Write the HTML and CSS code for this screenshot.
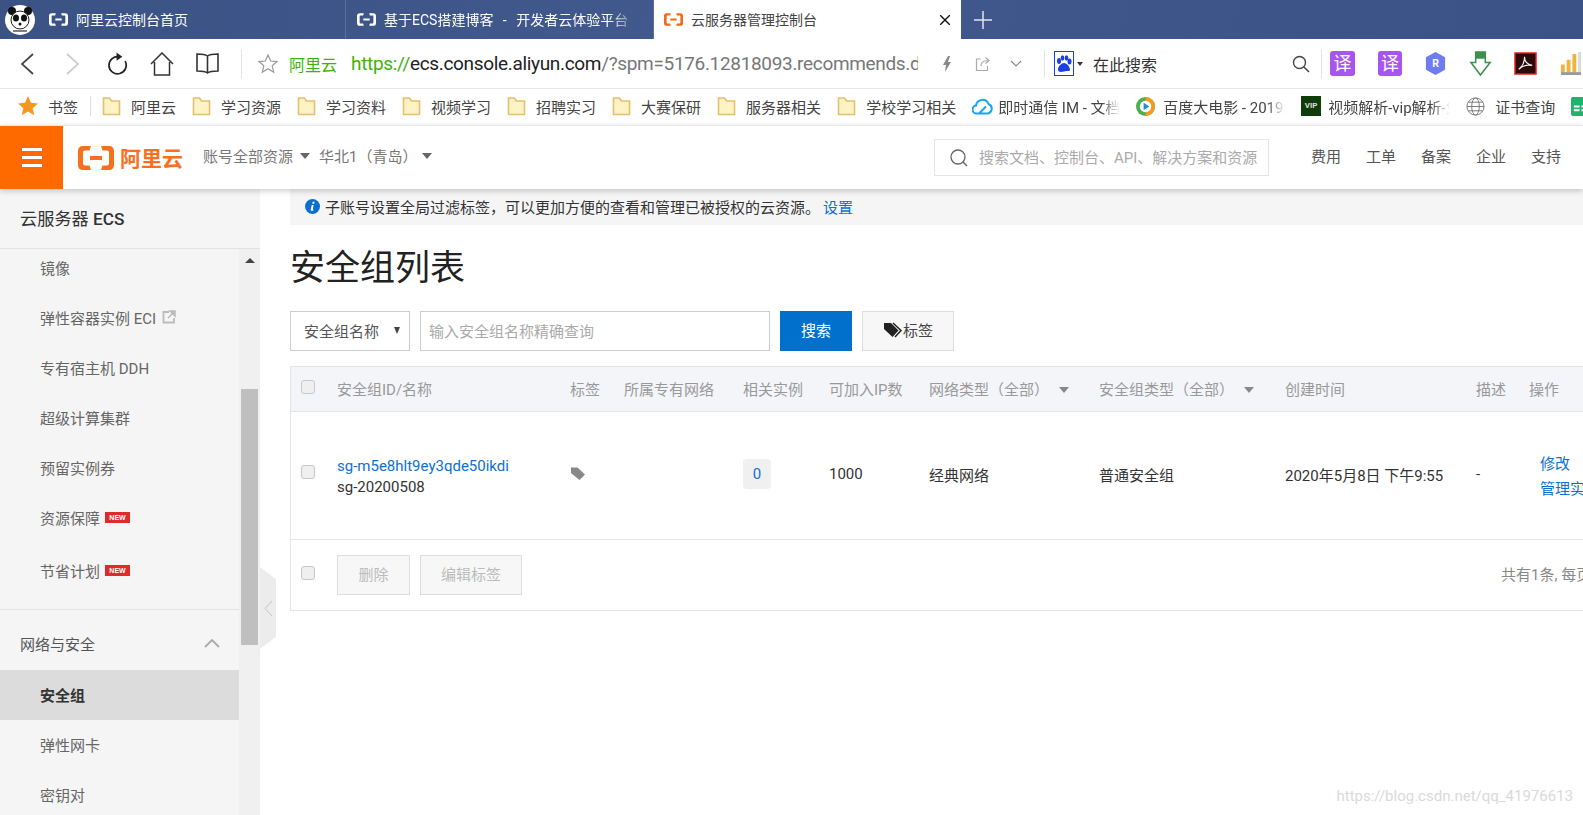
FILE: index.html
```html
<!DOCTYPE html>
<html>
<head>
  <meta charset="utf-8">
  <title>云服务器管理控制台</title>
  <link rel="stylesheet" href="styles.css">
</head>
<body>

  <svg class="sprite">
    <symbol id="ali" viewBox="0 0 36 24">
      <path d="M13 0H5C2 0 0 2 0 5v14c0 3 2 5 5 5h8l-1.500-4.500H7C5.800 19.500 5 18.700 5 17.500v-11C5 5.300 5.800 4.500 7 4.500h4.500zM23 0h8c3 0 5 2 5 5v14c0 3-2 5-5 5h-8l1.500-4.500H29c1.200 0 2-.8 2-2v-11c0-1.200-.8-2-2-2h-4.500zM12 10h12v4H12z"/>
    </symbol>
    <symbol id="folder" viewBox="0 0 19 19">
      <path d="M1.500 1h6l2 3h8v13.500h-16z" fill="#fdf3c4" stroke="#e3c070" stroke-width="1.600"/>
    </symbol>
    <symbol id="tag" viewBox="0 0 16 16">
      <path d="M1 2.500h6.500L15 9.500 9.500 15 1 8z"/>
    </symbol>
  </svg>

  <!-- Browser tabs -->
  <div class="tabbar">
    <svg class="panda" viewBox="0 0 30 30">
      <circle cx="15" cy="15" r="15" fill="#fff"/>
      <circle cx="7" cy="6" r="4" fill="#111"/>
      <circle cx="23" cy="6" r="4" fill="#111"/>
      <circle cx="15" cy="15" r="9" fill="#fff" stroke="#222"/>
      <ellipse cx="11" cy="13" rx="3" ry="3.500" fill="#111"/>
      <ellipse cx="19" cy="13" rx="3" ry="3.500" fill="#111"/>
      <circle cx="15" cy="19" r="1.500" fill="#111"/>
      <path d="M8 26h14" stroke="#555" stroke-width="1.500"/>
    </svg>
    <div class="tab tab-first">
      <svg class="tab-icon"><use href="#ali"/></svg>
      <span class="tab-title">阿里云控制台首页</span>
    </div>
    <div class="tab">
      <svg class="tab-icon"><use href="#ali"/></svg>
      <span class="tab-title tab-fade">基于ECS搭建博客 - 开发者云体验平台</span>
    </div>
    <div class="tab tab-active">
      <svg class="tab-icon"><use href="#ali"/></svg>
      <span class="tab-title">云服务器管理控制台</span>
      <svg class="tab-close" viewBox="0 0 10 10"><path d="M0 0l10 10M10 0L0 10" stroke="#111" stroke-width="1.400"/></svg>
    </div>
    <svg class="tab-new" viewBox="0 0 18 18"><path d="M9 0v18M0 9h18" stroke="#dfe4ee" stroke-width="1.500"/></svg>
  </div>

  <!-- Address bar -->
  <div class="toolbar">
    <svg class="tool tool-nav" viewBox="0 0 14 22"><path d="M13 1L2 11l11 10" fill="none" stroke="#444" stroke-width="1.700"/></svg>
    <svg class="tool tool-nav tool-next" viewBox="0 0 14 22"><path d="M1 1l11 10L1 21" fill="none" stroke="#ccc" stroke-width="1.700"/></svg>
    <svg class="tool tool-reload" viewBox="0 0 22 24"><path d="M13 4.500A9 9 0 1 0 19 9" fill="none" stroke="#222" stroke-width="1.800"/><path d="M10 0l6 4.500-6 4z" fill="#222"/></svg>
    <svg class="tool tool-home" viewBox="0 0 24 24"><path d="M1 12L12 1l11 11M4.500 10v13h15V10" fill="none" stroke="#333" stroke-width="1.500"/></svg>
    <svg class="tool tool-book" viewBox="0 0 23 22"><path d="M11.500 3C9 1 5 1 1 1v17c4 0 8 0 10.500 2 2.500-2 6.500-2 10.500-2V1c-4 0-8 0-10.500 2zv17" fill="none" stroke="#333" stroke-width="1.600"/></svg>
    <span class="tool-sep"></span>
    <svg class="tool tool-star" viewBox="0 0 20 20"><path d="M10 1l2.700 6 6.300.6-4.800 4.200 1.500 6.400L10 14.800l-5.700 3.400 1.500-6.400L1 7.600 7.300 7z" fill="none" stroke="#999" stroke-width="1.200"/></svg>
    <span class="site-name">阿里云</span>
    <div class="url"><span class="url-scheme">https://</span><span class="url-host">ecs.console.aliyun.com</span>/?spm=5176.12818093.recommends.dropdown.console</div>
    <svg class="tool tool-bolt" viewBox="0 0 10 16"><path d="M6 0L1 9h3l-1 7 6-10H6l2-6z" fill="#888"/></svg>
    <svg class="tool tool-share" viewBox="0 0 16 16"><path d="M6 3H1.500v11.500h11V10M6 10c0-3 2-5.500 7-5.500M10.500 1.500l3.500 3-3.500 3" fill="none" stroke="#aaa" stroke-width="1.200"/></svg>
    <svg class="tool tool-down" viewBox="0 0 12 7"><path d="M1 1l5 5 5-5" fill="none" stroke="#888" stroke-width="1.200"/></svg>
    <span class="tool-sep tool-sep-2"></span>
    <div class="engine">
      <svg class="paw" viewBox="0 0 20 25">
        <rect x=".5" y=".5" width="19" height="24" fill="#fff" stroke="#1a3fe8"/>
        <path d="M10 12c-3 0-6 4-6 6.500s2.500 3 6 2 6 .5 6-2-3-6.500-6-6.500z" fill="#1a3fe8"/>
        <ellipse cx="5" cy="10" rx="2" ry="3" fill="#1a3fe8"/>
        <ellipse cx="8.500" cy="7" rx="1.800" ry="2.800" fill="#1a3fe8"/>
        <ellipse cx="12.500" cy="7" rx="1.800" ry="2.800" fill="#1a3fe8"/>
        <ellipse cx="15.500" cy="10.500" rx="2" ry="3" fill="#1a3fe8"/>
      </svg>
      <span class="caret caret-small"></span>
      <span class="engine-text">在此搜索</span>
    </div>
    <svg class="tool tool-find" viewBox="0 0 18 18"><circle cx="7.500" cy="7.500" r="6" fill="none" stroke="#444" stroke-width="1.400"/><path d="M12 12l5 5" stroke="#444" stroke-width="1.500"/></svg>
    <span class="tool-sep tool-sep-3"></span>
    <div class="plugins">
      <span class="plugin-yi">译</span>
      <span class="plugin-yi">译</span>
      <svg class="plugin" viewBox="0 0 24 26"><path d="M12 1l10 5.500v13L12 25 2 19.500v-13z" fill="#6d7df0"/><text x="12" y="17" class="plugin-r">R</text></svg>
      <svg class="plugin" viewBox="0 0 22 26"><path d="M6 1h10v11h5L11 25 1 12h5z" fill="#fff" stroke="#3d8f4c" stroke-width="1.600"/><path d="M6 1h10v7H6z" fill="#3d8f4c"/></svg>
      <svg class="plugin" viewBox="0 0 24 24"><rect x="1" y="1" width="22" height="22" fill="#2a0a0a" stroke="#e0281c" stroke-width="1.500"/><path d="M5 18c4-3 6-8 6-13 0 5 3 8 8 9-5-1-10 0-14 4z" fill="none" stroke="#eee" stroke-width="1.200"/></svg>
      <svg class="plugin" viewBox="0 0 24 26"><path d="M2 14h4v8H2zM8 9h4v13H8zM14 3h4v19h-4z" fill="#f0b33c"/><path d="M20 1h3v21h-3z" fill="#d9d9d9"/><path d="M2 22h21v3H2z" fill="#999"/></svg>
    </div>
  </div>

  <!-- Bookmarks -->
  <div class="bookmarks">
    <svg class="bm-star" viewBox="0 0 20 20"><path d="M10 0l3 6.800 7 .7-5.300 4.700 1.600 7L10 15.500l-6.300 3.700 1.600-7L0 7.500l7-.7z" fill="#f7981d"/></svg>
    <span class="bm-label">书签</span>
    <span class="bm-sep"></span>
    <span class="bm"><svg class="bm-icon"><use href="#folder"/></svg>阿里云</span>
    <span class="bm"><svg class="bm-icon"><use href="#folder"/></svg>学习资源</span>
    <span class="bm"><svg class="bm-icon"><use href="#folder"/></svg>学习资料</span>
    <span class="bm"><svg class="bm-icon"><use href="#folder"/></svg>视频学习</span>
    <span class="bm"><svg class="bm-icon"><use href="#folder"/></svg>招聘实习</span>
    <span class="bm"><svg class="bm-icon"><use href="#folder"/></svg>大赛保研</span>
    <span class="bm"><svg class="bm-icon"><use href="#folder"/></svg>服务器相关</span>
    <span class="bm"><svg class="bm-icon"><use href="#folder"/></svg>学校学习相关</span>
    <span class="bm bm-site">
      <svg class="bm-icon bm-cloud" viewBox="0 0 22 18"><path d="M5 16a4 4 0 0 1-1-8 6.500 6.500 0 0 1 12.500-1.500A5 5 0 0 1 16 16zM7 16l7-7" fill="none" stroke="#1aa6ee" stroke-width="2"/></svg>
      <span class="bm-fade">即时通信 IM - 文档中心</span>
    </span>
    <span class="bm bm-site">
      <svg class="bm-icon bm-movie" viewBox="0 0 20 20"><circle cx="10" cy="10" r="10" fill="#4cae4f"/><path d="M10 0a10 10 0 0 1 0 20z" fill="#f39a1f"/><circle cx="10" cy="10" r="6" fill="#fff"/><path d="M8 6l6 4-6 4z" fill="#1c8fd8"/></svg>
      <span class="bm-fade">百度大电影 - 2019最新</span>
    </span>
    <span class="bm bm-site">
      <span class="bm-vip">VIP</span>
      <span class="bm-fade">视频解析-vip解析-免费</span>
    </span>
    <span class="bm">
      <svg class="bm-icon" viewBox="0 0 20 20"><g fill="none" stroke="#777"><circle cx="10" cy="10" r="9"/><ellipse cx="10" cy="10" rx="4" ry="9"/><path d="M1 10h18M2.500 5.500h15M2.500 14.500h15"/></g></svg>证书查询
    </span>
    <svg class="bm-icon" viewBox="0 0 20 20"><rect width="20" height="20" rx="2" fill="#21b36b"/><path d="M3 9h6v2H3zM11 9h6v2h-6zM3 13h6v2H3zM11 13h6v2h-6z" fill="#fff"/></svg>
  </div>

  <!-- Console header -->
  <header class="topbar">
    <div class="burger"><span></span><span></span><span></span></div>
    <svg class="logo-icon"><use href="#ali"/></svg>
    <span class="logo-text">阿里云</span>
    <span class="top-select">账号全部资源<i class="caret"></i></span>
    <span class="top-select top-region">华北1（青岛）<i class="caret"></i></span>
    <div class="top-search">
      <svg class="top-search-icon" viewBox="0 0 18 18"><circle cx="8" cy="8" r="7" fill="none" stroke="#666" stroke-width="1.300"/><path d="M13 13l4 4" stroke="#666" stroke-width="1.400"/></svg>
      <span class="top-search-text">搜索文档、控制台、API、解决方案和资源</span>
    </div>
    <nav class="top-nav">
      <a>费用</a><a>工单</a><a>备案</a><a>企业</a><a>支持</a>
    </nav>
  </header>

  <div class="console">
    <!-- Left menu -->
    <aside class="sidebar">
      <div class="side-title">云服务器 <b>ECS</b></div>
      <div class="side-body">
        <ul class="side-menu">
          <li>镜像</li>
          <li>弹性容器实例 ECI
            <svg class="ext" viewBox="0 0 14 14"><path d="M7 2H1.500v10.500H12V8" fill="none" stroke="#bbb" stroke-width="1.800"/><path d="M8 1h5v5zM11 3L6 8" fill="#bbb" stroke="#bbb" stroke-width="1.500"/></svg>
          </li>
          <li>专有宿主机 DDH</li>
          <li>超级计算集群</li>
          <li>预留实例券</li>
          <li>资源保障 <span class="new">NEW</span></li>
          <li class="item-tall">节省计划 <span class="new">NEW</span></li>
          <li class="side-group">网络与安全
            <svg class="group-arrow" viewBox="0 0 16 9"><path d="M1 8l7-7 7 7" fill="none" stroke="#aaa" stroke-width="1.800"/></svg>
          </li>
          <li class="active">安全组</li>
          <li>弹性网卡</li>
          <li>密钥对</li>
        </ul>
        <div class="side-scroll">
          <span class="scroll-arrow"></span>
          <div class="scroll-thumb"></div>
        </div>
      </div>
    </aside>
    <div class="side-handle">
      <svg viewBox="0 0 9 17"><path d="M8 1L1 8.500 8 16" fill="none" stroke="#c4c4c4"/></svg>
    </div>

    <!-- Content -->
    <main class="main">
      <div class="notice">
        <svg class="notice-icon" viewBox="0 0 16 16"><circle cx="8" cy="8" r="8" fill="#0b6fd0"/><path d="M8.200 3h2l-.4 2h-2zM7.200 6.500h2L8.300 11c-.1.500.3.500 1 .2l-.2.900c-1.800 1-3.300.6-3-1z" fill="#fff"/></svg>
        子账号设置全局过滤标签，可以更加方便的查看和管理已被授权的云资源。 <a class="link notice-link">设置</a>
      </div>

      <h1 class="page-title">安全组列表</h1>

      <div class="filters">
        <div class="select">安全组名称<i class="select-caret"></i></div>
        <div class="input">输入安全组名称精确查询</div>
        <button class="btn btn-primary">搜索</button>
        <button class="btn btn-tag">
          <svg class="btn-tag-icon" viewBox="0 0 20 16"><path d="M1 1h7l7.500 7.500-6 6.500L1 7z" fill="#222"/><path d="M10 1l8 7.500-6 6.500" fill="none" stroke="#222" stroke-width="1.500"/></svg>标签
        </button>
      </div>

      <div class="table-box">
        <table class="grid">
          <colgroup>
            <col class="c-check"><col class="c-id"><col class="c-tag"><col class="c-vpc"><col class="c-inst">
            <col class="c-ip"><col class="c-net"><col class="c-type"><col class="c-time"><col class="c-desc"><col class="c-act">
          </colgroup>
          <thead>
            <tr>
              <th><span class="check"></span></th>
              <th>安全组ID/名称</th>
              <th>标签</th>
              <th>所属专有网络</th>
              <th>相关实例</th>
              <th>可加入IP数</th>
              <th>网络类型（全部）<i class="caret caret-head"></i></th>
              <th>安全组类型（全部）<i class="caret caret-head"></i></th>
              <th>创建时间</th>
              <th>描述</th>
              <th>操作</th>
            </tr>
          </thead>
          <tbody>
            <tr>
              <td><span class="check"></span></td>
              <td class="cell-id">
                <a class="link">sg-m5e8hlt9ey3qde50ikdi</a>
                <div>sg-20200508</div>
              </td>
              <td><svg class="row-tag"><use href="#tag"/></svg></td>
              <td></td>
              <td><span class="count">0</span></td>
              <td>1000</td>
              <td>经典网络</td>
              <td>普通安全组</td>
              <td>2020年5月8日 下午9:55</td>
              <td>-</td>
              <td class="cell-act">
                <a class="link">修改</a>
                <a class="link">管理实例</a>
              </td>
            </tr>
          </tbody>
        </table>
        <div class="table-foot">
          <span class="check"></span>
          <button class="btn btn-off btn-del">删除</button>
          <button class="btn btn-off">编辑标签</button>
          <span class="pager">共有1条, 每页显示：20条</span>
        </div>
      </div>
    </main>
  </div>

  <span class="watermark">https://blog.csdn.net/qq_41976613</span>

</body>
</html>
```

FILE: styles.css
```css
* { box-sizing: border-box; }

html, body {
  margin: 0;
  height: 815px;
  overflow: hidden;
}

body {
  display: flex;
  flex-direction: column;
  background: #fff;
  color: #333;
  font-family: Roboto, "Noto Sans CJK SC", sans-serif;
  font-size: 15px;
  position: relative;
}

i { font-style: normal; }
ul { margin: 0; padding: 0; list-style: none; }

.sprite { width: 0; height: 0; position: absolute; }

.caret {
  display: inline-block;
  width: 0;
  height: 0;
  border-left: 5px solid transparent;
  border-right: 5px solid transparent;
  border-top: 6px solid #666;
}

/* Browser tabs */
.tabbar {
  height: 39px;
  flex: none;
  display: flex;
  align-items: center;
  background: linear-gradient(100deg, #3a5284, #41598c 45%, #3a5286);
}

.panda { width: 30px; height: 30px; margin: 0 14px 0 5px; flex: none; }

.tab {
  width: 308px;
  height: 39px;
  flex: none;
  display: flex;
  align-items: center;
  padding-left: 11px;
  color: #fff;
  font-size: 14px;
  border-right: 1px solid #5a6f9c;
}

.tab-first { width: 297px; padding-left: 0; }

.tab-icon { width: 19px; height: 13px; margin-right: 8px; flex: none; fill: #fff; }

.tab-title { white-space: nowrap; overflow: hidden; padding-bottom: 2px; }

.tab-fade {
  width: 255px;
  word-spacing: 6px;
  -webkit-mask-image: linear-gradient(90deg, #000 88%, transparent);
  mask-image: linear-gradient(90deg, #000 88%, transparent);
}

.tab-active {
  width: 307px;
  background: #fff;
  color: #444;
  border-right: 0;
  padding-left: 10px;
  position: relative;
}

.tab-active .tab-icon { fill: #f26a14; }

.tab-close { width: 10px; height: 10px; margin-left: auto; margin-right: 11px; }

.tab-new { width: 18px; height: 18px; margin-left: 13px; }

/* Address bar */
.toolbar {
  height: 50px;
  flex: none;
  display: flex;
  align-items: center;
  padding-left: 20px;
  border-bottom: 1px solid #e6e6e6;
}

.tool { flex: none; }
.tool-nav { width: 14px; height: 22px; }
.tool-next { margin-left: 32px; }
.tool-reload { width: 21px; height: 24px; margin-left: 27px; }
.tool-home { width: 24px; height: 24px; margin-left: 22px; }
.tool-book { width: 23px; height: 22px; margin-left: 22px; }

.tool-sep { width: 1px; height: 28px; background: #e2e2e2; margin-left: 22px; flex: none; }

.tool-star { width: 20px; height: 20px; margin-left: 16px; }

.site-name { color: #3cb30a; font-size: 16px; margin-left: 11px; flex: none; }

.url {
  width: 567px;
  margin-left: 14px;
  flex: none;
  font-size: 19px;
  letter-spacing: -.33px;
  color: #777;
  white-space: nowrap;
  overflow: hidden;
}

.url-scheme { color: #3cb30a; }
.url-host { color: #222; }

.tool-bolt { width: 10px; height: 16px; margin-left: 24px; }
.tool-share { width: 16px; height: 16px; margin-left: 23px; }
.tool-down { width: 12px; height: 7px; margin-left: 19px; }

.tool-sep-2 { margin-left: 22px; }

.engine { display: flex; align-items: center; margin-left: 9px; flex: none; }
.paw { width: 20px; height: 25px; }
.caret-small { border-width: 4px 3px 0; border-top-color: #333; margin: 0 0 0 3px; }
.engine-text { font-size: 16px; margin-left: 10px; }

.tool-find { width: 18px; height: 18px; margin-left: 135px; }
.tool-sep-3 { margin-left: 11px; }

.plugins { display: flex; align-items: center; gap: 22px; margin-left: 8px; flex: none; }

.plugin-yi {
  width: 25px;
  height: 25px;
  border-radius: 3px;
  background: #a855f0;
  color: #fff;
  font-size: 18px;
  line-height: 25px;
  text-align: center;
}

.plugin-yi + .plugin-yi { width: 24px; margin-left: 1px; }

.plugin { width: 23px; height: 25px; flex: none; }

.plugin-r { fill: #fff; font-size: 11px; font-weight: 700; text-anchor: middle; }

/* Bookmarks */
.bookmarks {
  height: 36px;
  flex: none;
  display: flex;
  align-items: center;
  padding: 0 0 2px 18px;
  gap: 16px;
  white-space: nowrap;
  color: #444;
  overflow: hidden;
}

.bm-star { width: 20px; height: 20px; flex: none; margin-right: -6px; }
.bm-label { margin-right: -4px; }
.bm-sep { width: 1px; height: 20px; background: #ddd; margin-right: -5px; flex: none; }

.bm { display: flex; align-items: center; flex: none; }

.bm-icon { width: 19px; height: 19px; margin-right: 10px; flex: none; }
.bm-cloud { width: 22px; margin-right: 4px; }
.bm-movie { margin-right: 8px; }

.bm-site { margin-right: 0; }

.bm-fade {
  width: 122px;
  overflow: hidden;
  -webkit-mask-image: linear-gradient(90deg, #000 85%, transparent);
  mask-image: linear-gradient(90deg, #000 85%, transparent);
}

.bm-vip {
  width: 20px;
  height: 20px;
  margin-right: 7px;
  background: #0f3d0a;
  color: #ddd;
  font-size: 8px;
  font-weight: 700;
  line-height: 20px;
  text-align: center;
  flex: none;
}

/* Console header */
.topbar {
  height: 64px;
  flex: none;
  display: flex;
  align-items: center;
  background: #fff;
  border-top: 1px solid #e8e8e8;
  box-shadow: 0 2px 6px rgba(0, 0, 0, .2);
  position: relative;
  z-index: 5;
  color: #666;
}

.burger {
  width: 63px;
  height: 100%;
  flex: none;
  background: #ff6a00;
  display: flex;
  flex-direction: column;
  justify-content: center;
  align-items: center;
  gap: 5px;
}

.burger span { width: 20px; height: 3px; background: #fff; }

.logo-icon { width: 36px; height: 24px; margin-left: 15px; fill: #fa6f1c; flex: none; }

.logo-text {
  margin-left: 6px;
  width: 64px;
  padding-bottom: 2px;
  color: #fa6f1c;
  font-size: 21px;
  font-weight: 700;
  flex: none;
}

.top-select {
  margin-left: 19px;
  padding-bottom: 4px;
  display: flex;
  align-items: center;
  gap: 7px;
  color: #777;
  white-space: nowrap;
}

.top-region { margin-left: 9px; gap: 5px; }

.top-search {
  width: 335px;
  height: 37px;
  margin-left: auto;
  display: flex;
  align-items: center;
  padding-left: 15px;
  border: 1px solid #e5e5e5;
  color: #aaa;
  white-space: nowrap;
  overflow: hidden;
}

.top-search-icon { width: 18px; height: 18px; margin-right: 11px; flex: none; }
.top-search-text { padding-bottom: 3px; }

.top-nav {
  display: flex;
  gap: 25px;
  margin-left: 42px;
  margin-right: 22px;
  padding-bottom: 5px;
  color: #555;
}

/* Left menu */
.console {
  flex: 1;
  min-height: 0;
  display: flex;
  position: relative;
}

.sidebar {
  width: 260px;
  flex: none;
  display: flex;
  flex-direction: column;
  background: #f5f5f5;
}

.side-title {
  height: 60px;
  flex: none;
  line-height: 60px;
  padding-left: 20px;
  font-size: 17.200px;
  color: #333;
  border-bottom: 1px solid #e2e2e2;
}

.side-title b { font-weight: 500; }

.side-body { flex: 1; min-height: 0; display: flex; }

.side-menu {
  width: 239px;
  flex: none;
  margin-top: -6px;
  color: #666;
}

.side-menu li {
  height: 50px;
  padding: 0 0 2px 40px;
  white-space: nowrap;
  display: flex;
  align-items: center;
}

.side-menu .item-tall { height: 56px; }

.side-menu .side-group {
  height: 61px;
  margin-top: 10px;
  padding: 7px 19px 0 20px;
  border-top: 1px solid #e2e2e2;
  color: #555;
  position: relative;
}

.side-menu .active {
  background: #dcdcdc;
  color: #333;
  font-weight: 700;
}

.group-arrow { width: 16px; height: 9px; margin-left: auto; }

.ext { width: 14px; height: 14px; margin-left: 6px; }

.new {
  margin-left: 5px;
  width: 25px;
  height: 11px;
  line-height: 11px;
  background: #e02b2b;
  color: #fff;
  font-family: "Liberation Sans", sans-serif;
  font-size: 7px;
  font-weight: 700;
  text-align: center;
}

.side-scroll {
  width: 21px;
  flex: none;
  background: #f0f0f0;
  display: flex;
  flex-direction: column;
  align-items: center;
}

.scroll-arrow {
  margin-top: 9px;
  border-left: 5px solid transparent;
  border-right: 5px solid transparent;
  border-bottom: 5px solid #444;
}

.scroll-thumb {
  width: 17px;
  height: 256px;
  margin-top: 126px;
  background: #bfbfbf;
}

.side-handle {
  position: absolute;
  left: 260px;
  top: 378px;
  width: 16px;
  height: 82px;
  display: flex;
  align-items: center;
  padding-left: 4px;
  background: #ececec;
  clip-path: polygon(0 0, 100% 15%, 100% 85%, 0 100%);
}

.side-handle svg { width: 9px; height: 17px; }

/* Content */
.main {
  flex: 1;
  min-width: 0;
  padding-left: 30px;
  overflow: hidden;
}

.notice {
  width: 1400px;
  height: 36px;
  display: flex;
  align-items: center;
  padding: 0 0 2px 15px;
  background: #f5f5f6;
  white-space: nowrap;
}

.notice-icon { width: 15px; height: 15px; margin-right: 5px; flex: none; }
.notice-link { margin-left: 3px; }

.link { color: #0d6fd0; }

.page-title {
  margin: 20px 0 18px;
  height: 48px;
  font-size: 35px;
  font-weight: 400;
  line-height: 48px;
  color: #222;
}

.filters { display: flex; gap: 10px; height: 40px; }

.select, .input {
  height: 40px;
  border: 1px solid #ccc;
  display: flex;
  align-items: center;
  padding-bottom: 2px;
  white-space: nowrap;
}

.select { width: 120px; padding-left: 13px; color: #555; position: relative; }

.select-caret {
  margin-left: auto;
  margin-right: 9px;
  border-left: 3.500px solid transparent;
  border-right: 3.500px solid transparent;
  border-top: 7px solid #444;
}

.input { width: 350px; padding-left: 8px; color: #aaa; }

.btn {
  height: 40px;
  border: 1px solid transparent;
  padding: 0 0 3px;
  font: inherit;
  display: flex;
  align-items: center;
  justify-content: center;
  flex: none;
}

.btn-primary { width: 72px; background: #0070cc; color: #fff; }

.btn-tag { width: 92px; background: #f7f7f7; border-color: #ddd; color: #444; }

.btn-tag-icon { width: 20px; height: 16px; }

.btn-off { width: 102px; background: #f7f7f7; border-color: #ddd; color: #bbb; }
.btn-del { width: 73px; margin-right: 10px; }

.table-box {
  width: 1400px;
  margin-top: 15px;
  border: 1px solid #e3e5e8;
}

.grid {
  width: 100%;
  table-layout: fixed;
  border-collapse: collapse;
}

.c-check { width: 46px; }
.c-id { width: 233px; }
.c-tag { width: 54px; }
.c-vpc { width: 119px; }
.c-inst { width: 86px; }
.c-ip { width: 100px; }
.c-net { width: 170px; }
.c-type { width: 186px; }
.c-time { width: 191px; }
.c-desc { width: 53px; }
.c-act { width: 160px; }

.grid th {
  height: 44px;
  padding: 0;
  background: #f4f5f9;
  border-bottom: 1px solid #e3e5e8;
  color: #999;
  font-weight: 400;
  text-align: left;
  white-space: nowrap;
}

.grid td {
  height: 128px;
  padding: 0 0 2px;
  border-bottom: 1px solid #e3e5e8;
  white-space: nowrap;
}

.check {
  display: block;
  width: 14px;
  height: 14px;
  margin: 0 0 4px 10px;
  border: 1px solid #c8c8c8;
  border-radius: 3px;
  background: #efefef;
  flex: none;
}

.caret-head { margin-left: 10px; border-top-color: #888; vertical-align: 2px; }

.grid .cell-id { line-height: 21px; padding: 3px 0 0; }

.row-tag { width: 16px; height: 16px; fill: #888; display: block; margin-bottom: 2px; }

.count {
  display: inline-block;
  width: 28px;
  height: 30px;
  line-height: 30px;
  border-radius: 4px;
  background: #f0f0f0;
  color: #0d6fd0;
  text-align: center;
}

.grid .cell-act { padding: 3px 0 0 11px; }
.cell-act a { display: block; line-height: 25px; }

.table-foot {
  height: 70px;
  display: flex;
  align-items: center;
}

.table-foot .check { margin-right: 22px; margin-bottom: 4px; }

.pager { margin-left: auto; padding: 0 21px 2px 0; color: #888; white-space: nowrap; }

.watermark {
  position: absolute;
  right: 10px;
  bottom: 10px;
  color: #dadada;
  font-size: 15px;
}
```
